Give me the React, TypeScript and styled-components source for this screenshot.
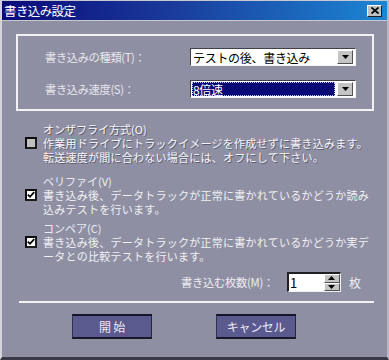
import React from "react";
import styled, { createGlobalStyle } from "styled-components";

const GlobalStyle = createGlobalStyle`
    html, body {
        margin: 0;
        padding: 0;
        background: #8f8fa3;
    }
    body {
        font-family: "Noto Sans CJK JP", "Noto Sans", sans-serif;
    }
`;

const Window = styled.div`
    width: 389px;
    height: 360px;
    box-sizing: border-box;
    display: flex;
    flex-direction: column;
    background: #8f8fa3;
    border-top: 1px solid #c8c8d0;
    border-left: 2px solid #d4d4dc;
    border-right: 2px solid #b8b8c4;
    border-bottom: 3px solid #3a3a46;
    overflow: hidden;
`;

const TitleBar = styled.div`
    height: 19px;
    flex-shrink: 0;
    display: flex;
    align-items: center;
    justify-content: space-between;
    padding: 0 5px 0 2px;
    background: linear-gradient(90deg, #0a0a7a 0%, #1a3c9c 45%, #1c86d4 100%);
    border-bottom: 1px solid #c8c8d0;
`;

const TitleText = styled.span`
    color: #ffffff;
    font-size: 12.5px;
    line-height: 19px;
    letter-spacing: -0.6px;
`;

const CloseButton = styled.div`
    width: 15px;
    height: 12px;
    box-sizing: border-box;
    display: flex;
    align-items: center;
    justify-content: center;
    background: #c0c0c0;
    border-top: 1px solid #ffffff;
    border-left: 1px solid #ffffff;
    border-right: 1px solid #202020;
    border-bottom: 1px solid #202020;
`;

const Body = styled.div`
    display: flex;
    flex-direction: column;
    padding: 13px 13px 0 14px;
`;

const GroupBox = styled.div`
    height: 77px;
    box-sizing: border-box;
    border: 2px solid #f2f2f6;
    padding: 12px 16px 0 27px;
    display: flex;
    flex-direction: column;
    gap: 14px;
`;

const FieldRow = styled.div`
    display: grid;
    grid-template-columns: 1fr 166px;
    align-items: center;
`;

const FieldLabel = styled.span`
    color: #e6e6ee;
    font-size: 11.3px;
    letter-spacing: -0.4px;
`;

const Select = styled.div`
    height: 18px;
    box-sizing: border-box;
    display: flex;
    align-items: center;
    background: #ffffff;
    border-top: 1px solid #404048;
    border-left: 1px solid #404048;
    border-bottom: 1px solid #f4f4f4;
    border-right: 1px solid #f4f4f4;
    padding: 1px 2px 1px 1px;
`;

const SelectValue = styled.span<{ $focused?: boolean }>`
    flex: 1;
    height: 100%;
    display: flex;
    align-items: center;
    padding-left: 1px;
    font-size: 12px;
    letter-spacing: -0.3px;
    color: ${p => (p.$focused ? "#ffffff" : "#000000")};
    background: ${p => (p.$focused ? "#0a0a76" : "transparent")};
    outline: ${p => (p.$focused ? "1px dotted #c0c0ff" : "none")};
    outline-offset: -1px;
`;

const DropButton = styled.div`
    width: 16px;
    height: 14px;
    box-sizing: border-box;
    display: flex;
    align-items: center;
    justify-content: center;
    margin-left: 2px;
    background: #c4c4c4;
    border-top: 1px solid #ffffff;
    border-left: 1px solid #ffffff;
    border-right: 1px solid #505050;
    border-bottom: 1px solid #505050;
`;

const Options = styled.div`
    display: flex;
    flex-direction: column;
    padding-left: 9px;
`;

const Option = styled.div<{ $top: number }>`
    display: grid;
    grid-template-columns: 18px 1fr;
    margin-top: ${p => p.$top}px;
`;

const OptionTitle = styled.span<{ $disabled?: boolean }>`
    grid-column: 2;
    font-size: 11px;
    line-height: 14px;
    letter-spacing: 0px;
    color: ${p => (p.$disabled ? "#f6f6fc" : "#ececf2")};
    text-shadow: ${p => (p.$disabled ? "1px 1px 0 #5c5c70" : "none")};
`;

const CheckBox = styled.div<{ $disabled?: boolean }>`
    grid-column: 1;
    width: 12px;
    height: 12px;
    margin-top: 1px;
    box-sizing: border-box;
    display: flex;
    align-items: center;
    justify-content: center;
    background: ${p => (p.$disabled ? "#c0c0c0" : "#ffffff")};
    border-top: 2px solid #0c0c0c;
    border-left: 2px solid #0c0c0c;
    border-right: 2px solid #1c1c1c;
    border-bottom: 2px solid #1c1c1c;
`;

const OptionText = styled.span<{ $disabled?: boolean }>`
    grid-column: 2;
    font-size: 11px;
    line-height: 14px;
    letter-spacing: 0.25px;
    color: ${p => (p.$disabled ? "#f6f6fc" : "#f0f0f4")};
    text-shadow: ${p => (p.$disabled ? "1px 1px 0 #5c5c70" : "none")};
`;

const CountRow = styled.div`
    display: flex;
    justify-content: flex-end;
    align-items: center;
    margin-top: 9px;
    padding-right: 13px;
    height: 20px;
`;

const CountLabel = styled.span`
    color: #ececf2;
    font-size: 11.3px;
    letter-spacing: -0.3px;
    margin-right: 13px;
`;

const Spinner = styled.div`
    width: 54px;
    height: 20px;
    box-sizing: border-box;
    display: flex;
    align-items: stretch;
    background: #ffffff;
    border-top: 2px solid #202024;
    border-left: 2px solid #202024;
    border-bottom: 1px solid #f0f0f0;
    border-right: 1px solid #f0f0f0;
`;

const SpinValue = styled.span`
    flex: 1;
    font-size: 13px;
    line-height: 17px;
    padding-left: 1px;
    color: #000000;
`;

const SpinArrows = styled.div`
    width: 16px;
    display: flex;
    flex-direction: column;
`;

const SpinArrow = styled.div`
    flex: 1;
    display: flex;
    align-items: center;
    justify-content: center;
    background: #c4c4c4;
    border-top: 1px solid #ffffff;
    border-left: 1px solid #ffffff;
    border-right: 1px solid #505050;
    border-bottom: 1px solid #505050;
`;

const Unit = styled.span`
    color: #ececf2;
    font-size: 12px;
    margin-left: 8px;
`;

const Separator = styled.div`
    height: 2px;
    background: #f2f2f6;
    margin: 9px 0 0 3px;
`;

const ButtonRow = styled.div`
    display: flex;
    gap: 64px;
    padding-left: 56px;
    margin-top: 11px;
`;

const Button = styled.div`
    width: 80px;
    height: 25px;
    box-sizing: border-box;
    display: flex;
    align-items: center;
    justify-content: center;
    background: #5a5a8e;
    border-top: 2px solid #14142a;
    border-left: 1px solid #30304a;
    border-right: 1px solid #24243a;
    border-bottom: 2px solid #181828;
    color: #eaeaf4;
    font-size: 12px;
    letter-spacing: -0.3px;
`;

const Arrow = ({ up }: { up?: boolean }) => (
    <svg width="7" height="4" viewBox="0 0 7 4">
        <path d={up ? "M3.5 0 L7 4 L0 4 Z" : "M0 0 L7 0 L3.5 4 Z"} fill="#000" />
    </svg>
);

const Check = () => (
    <svg width="8" height="8" viewBox="0 0 8 8">
        <path d="M0.8 3.6 L3 5.8 L7.2 1.2" stroke="#000" strokeWidth="1.8" fill="none" />
    </svg>
);

const options = [
    {
        title: "オンザフライ方式(O)",
        lines: ["作業用ドライブにトラックイメージを作成せずに書き込みます。", "転送速度が間に合わない場合には、オフにして下さい。"],
        checked: false,
        disabled: true,
        top: 11,
    },
    {
        title: "ベリファイ(V)",
        lines: ["書き込み後、データトラックが正常に書かれているかどうか読み", "込みテストを行います。"],
        checked: true,
        disabled: false,
        top: 10,
    },
    {
        title: "コンペア(C)",
        lines: ["書き込み後、データトラックが正常に書かれているかどうか実デ", "ータとの比較テストを行います。"],
        checked: true,
        disabled: false,
        top: 5,
    },
];

export default function App() {
    return (
        <>
            <GlobalStyle />
            <Window>
                <TitleBar>
                    <TitleText>書き込み設定</TitleText>
                    <CloseButton>
                        <svg width="8" height="7" viewBox="0 0 8 7">
                            <path d="M0.5 0.5 L7.5 6.5 M7.5 0.5 L0.5 6.5" stroke="#000" strokeWidth="1.7" />
                        </svg>
                    </CloseButton>
                </TitleBar>
                <Body>
                    <GroupBox>
                        <FieldRow>
                            <FieldLabel>書き込みの種類(T)：</FieldLabel>
                            <Select>
                                <SelectValue>テストの後、書き込み</SelectValue>
                                <DropButton>
                                    <Arrow />
                                </DropButton>
                            </Select>
                        </FieldRow>
                        <FieldRow>
                            <FieldLabel>書き込み速度(S)：</FieldLabel>
                            <Select>
                                <SelectValue $focused>8倍速</SelectValue>
                                <DropButton>
                                    <Arrow />
                                </DropButton>
                            </Select>
                        </FieldRow>
                    </GroupBox>

                    <Options>
                        {options.map(o => (
                            <Option key={o.title} $top={o.top}>
                                <OptionTitle $disabled={o.disabled}>{o.title}</OptionTitle>
                                <CheckBox $disabled={o.disabled}>{o.checked && <Check />}</CheckBox>
                                <OptionText $disabled={o.disabled}>
                                    {o.lines[0]}
                                    <br />
                                    {o.lines[1]}
                                </OptionText>
                            </Option>
                        ))}
                    </Options>

                    <CountRow>
                        <CountLabel>書き込む枚数(M)：</CountLabel>
                        <Spinner>
                            <SpinValue>1</SpinValue>
                            <SpinArrows>
                                <SpinArrow>
                                    <Arrow up />
                                </SpinArrow>
                                <SpinArrow>
                                    <Arrow />
                                </SpinArrow>
                            </SpinArrows>
                        </Spinner>
                        <Unit>枚</Unit>
                    </CountRow>

                    <Separator />

                    <ButtonRow>
                        <Button>開 始</Button>
                        <Button>キャンセル</Button>
                    </ButtonRow>
                </Body>
            </Window>
        </>
    );
}
